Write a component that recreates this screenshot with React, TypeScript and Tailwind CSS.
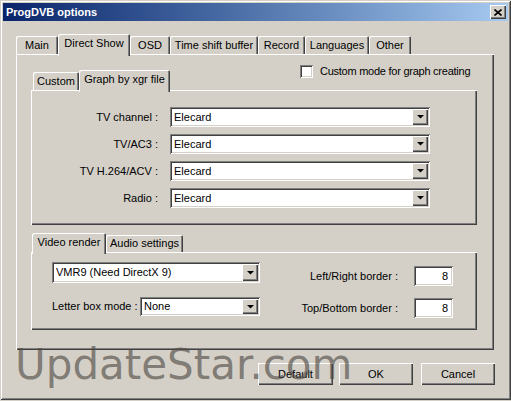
import React from "react";

const raised =
  "shadow-[inset_1px_1px_0_#ffffff,inset_-1px_-1px_0_#404040,inset_-2px_-2px_0_#808080]";
const sunken =
  "shadow-[inset_1px_1px_0_#808080,inset_-1px_-1px_0_#ffffff,inset_2px_2px_0_#404040,inset_-2px_-2px_0_#d4d0c8]";
const tabShadow =
  "shadow-[inset_1px_1px_0_#ffffff,inset_-1px_0_0_#404040,inset_-2px_0_0_#808080]";

function Arrow() {
  return (
    <svg width="7" height="4" viewBox="0 0 7 4" className="block">
      <polygon points="0,0 7,0 3.5,3.6" fill="#000" />
    </svg>
  );
}

function Combo({ w, h, text }: { w: string; h: string; text: string }) {
  return (
    <div className={`${w} ${h} bg-white ${sunken} flex items-stretch p-[2px]`}>
      <div className="flex-1 flex items-center pl-[2px] text-black">{text}</div>
      <div className={`w-[16px] bg-[#d4d0c8] ${raised} flex items-center justify-center`}>
        <Arrow />
      </div>
    </div>
  );
}

function Tab({
  w,
  label,
  selected,
  h = "h-[18px]",
  hs = "h-[22px]",
}: {
  w: string;
  label: string;
  selected?: boolean;
  h?: string;
  hs?: string;
}) {
  return (
    <div
      className={`${w} ${selected ? `${hs} -mb-[2px] relative z-10 pb-[3px]` : h} bg-[#d4d0c8] ${tabShadow} rounded-t-[2px] flex items-center justify-center whitespace-nowrap`}
    >
      {label}
    </div>
  );
}

function Button({ w, label }: { w: string; label: string }) {
  return (
    <div className={`${w} h-[22px] bg-[#d4d0c8] ${raised} flex items-center justify-center`}>
      {label}
    </div>
  );
}

export default function App() {
  return (
    <div className="w-[511px] h-[401px] bg-[#d4d0c8] relative overflow-hidden text-[11px] text-black font-['Liberation_Sans',Arial,sans-serif] leading-none">
      <div className="w-[511px] h-[400px] p-[3px] flex flex-col shadow-[inset_1px_1px_0_#d4d0c8,inset_-1px_-1px_0_#404040,inset_2px_2px_0_#ffffff,inset_-2px_-2px_0_#808080]">
        {/* Title bar */}
        <div className="h-[18px] bg-linear-to-r from-[#0a246a] to-[#a6caf0] flex items-center justify-between pl-[3px] pr-[2px]">
          <span className="text-white font-bold text-[11px]">ProgDVB options</span>
          <div className={`w-[16px] h-[14px] bg-[#d4d0c8] ${raised} flex items-center justify-center`}>
            <svg width="8" height="7" viewBox="0 0 8 7">
              <path d="M0.5 0.5 L7.5 6.5 M7.5 0.5 L0.5 6.5" stroke="#000" strokeWidth="1.6" />
            </svg>
          </div>
        </div>

        {/* Body */}
        <div className="pl-[13px] pt-[13px] flex flex-col">
          {/* Main tab strip */}
          <div className="h-[20px] flex items-end">
            <Tab w="w-[42px]" label="Main" />
            <Tab w="w-[72px]" label="Direct Show" selected />
            <Tab w="w-[40px]" label="OSD" />
            <Tab w="w-[88px]" label="Time shift buffer" />
            <Tab w="w-[47px]" label="Record" />
            <Tab w="w-[64px]" label="Languages" />
            <Tab w="w-[42px]" label="Other" />
          </div>

          {/* Main panel */}
          <div className={`w-[478px] h-[296px] bg-[#d4d0c8] ${raised} flex flex-col`}>
            {/* header: inner tabs + checkbox */}
            <div className="h-[36px] flex items-end">
              <div className="ml-[17px] flex items-end">
                <Tab w="w-[46px]" label="Custom" />
                <Tab w="w-[91px]" label="Graph by xgr file" selected hs="h-[22px]" />
              </div>
              <div className="self-start mt-[11px] ml-[130px] flex items-center gap-[7px]">
                <div className={`w-[13px] h-[13px] bg-white ${sunken}`} />
                <span className="tracking-[-0.25px]">Custom mode for graph creating</span>
              </div>
            </div>

            {/* Graph panel */}
            <div className={`ml-[15px] w-[446px] h-[135px] ${raised} pt-[17px] flex flex-col gap-[7px]`}>
              {[
                "TV channel :",
                "TV/AC3 :",
                "TV H.264/ACV :",
                "Radio :",
              ].map((l) => (
                <div key={l} className="flex items-center">
                  <div className="w-[127px] text-right">{l}</div>
                  <div className="ml-[12px]">
                    <Combo w="w-[260px]" h="h-[20px]" text="Elecard" />
                  </div>
                </div>
              ))}
            </div>

            {/* Second tab strip */}
            <div className="mt-[8px] ml-[16px] h-[19px] flex items-end">
              <Tab w="w-[74px]" label="Video render" selected hs="h-[21px]" />
              <Tab w="w-[77px]" label="Audio settings" h="h-[17px]" />
            </div>

            {/* Render panel */}
            <div className={`ml-[15px] w-[446px] h-[78px] ${raised} flex justify-between`}>
              <div className="pl-[21px] pt-[10px] flex flex-col">
                <Combo w="w-[208px]" h="h-[21px]" text="VMR9 (Need DirectX 9)" />
                <div className="mt-[14px] flex items-center">
                  <div className="w-[88px]">Letter box mode :</div>
                  <Combo w="w-[120px]" h="h-[19px]" text="None" />
                </div>
              </div>
              <div className="pr-[24px] pt-[14px] flex flex-col items-end">
                <div className="flex items-center gap-[16px]">
                  <span>Left/Right border :</span>
                  <div className={`w-[39px] h-[20px] bg-white ${sunken} flex items-center justify-end pr-[5px]`}>8</div>
                </div>
                <div className="mt-[12px] flex items-center gap-[16px]">
                  <span>Top/Bottom border :</span>
                  <div className={`w-[39px] h-[20px] bg-white ${sunken} flex items-center justify-end pr-[5px]`}>8</div>
                </div>
              </div>
            </div>
          </div>

          {/* Buttons */}
          <div className="mt-[13px] ml-[242px] flex">
            <Button w="w-[75px]" label="Default" />
            <div className="ml-[6px]">
              <Button w="w-[74px]" label="OK" />
            </div>
            <div className="ml-[8px]">
              <Button w="w-[74px]" label="Cancel" />
            </div>
          </div>
        </div>
      </div>

      {/* Watermark */}
      <div className="absolute left-[15px] top-[344px] text-[42px] leading-[42px] font-['DejaVu_Sans',sans-serif] text-[#504c46]/65 pointer-events-none whitespace-nowrap">
        UpdateStar.com
      </div>
    </div>
  );
}
